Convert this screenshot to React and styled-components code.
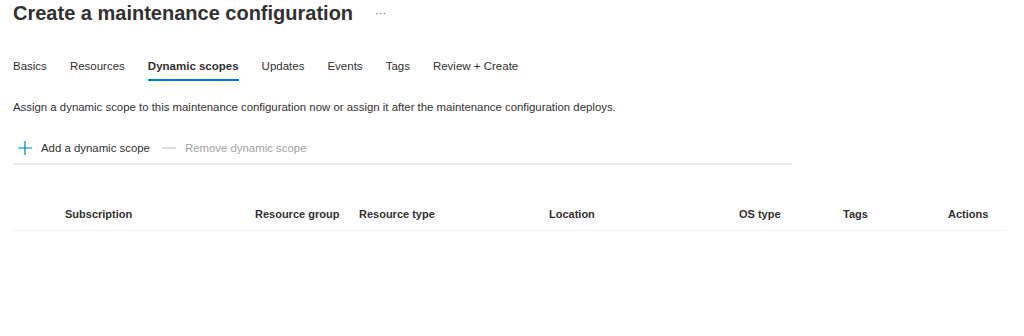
import styled, { createGlobalStyle } from "styled-components";

const GlobalStyle = createGlobalStyle`
  body {
    margin: 0;
    background: #ffffff;
    font-family: "Liberation Sans", Arial, sans-serif;
    color: #323130;
  }
`;

const tabs = ["Basics", "Resources", "Dynamic scopes", "Updates", "Events", "Tags", "Review + Create"];
const columns = ["", "Subscription", "Resource group", "Resource type", "Location", "OS type", "Tags", "Actions"];

const App = () => {
  return (
    <>
      <GlobalStyle />
      <Page>
        <TitleRow>
          <Title>Create a maintenance configuration</Title>
          <More>···</More>
        </TitleRow>
        <TabBar>
          {tabs.map((t) => (
            <Tab key={t} $active={t === "Dynamic scopes"}>
              {t}
            </Tab>
          ))}
        </TabBar>
        <Description>
          Assign a dynamic scope to this maintenance configuration now or assign it after the maintenance configuration deploys.
        </Description>
        <Toolbar>
          <ToolButton>
            <svg width="16" height="16" viewBox="0 0 16 16">
              <path d="M8 1v14M1 8h14" stroke="#0078d4" strokeWidth="1.2" fill="none" />
            </svg>
            Add a dynamic scope
          </ToolButton>
          <ToolButton $disabled>
            <svg width="16" height="16" viewBox="0 0 16 16">
              <path d="M1 8h14" stroke="#c8c6c4" strokeWidth="1.2" fill="none" />
            </svg>
            Remove dynamic scope
          </ToolButton>
        </Toolbar>
        <HeaderRow>
          {columns.map((c, i) => (
            <HeaderCell key={i}>{c}</HeaderCell>
          ))}
        </HeaderRow>
      </Page>
    </>
  );
};

export default App;

const Page = styled.div`
  padding: 0 17px 0 13px;
`;

const TitleRow = styled.div`
  display: flex;
  align-items: center;
  height: 26px;
`;

const Title = styled.h1`
  margin: 0;
  font-size: 20px;
  font-weight: 600;
  line-height: 26px;
  color: #323130;
`;

const More = styled.span`
  margin-left: 22px;
  font-size: 11px;
  color: #605e5c;
`;

const TabBar = styled.div`
  display: flex;
  gap: 23px;
  margin-top: 26px;
  height: 28px;
`;

const Tab = styled.div`
  position: relative;
  font-size: 11.5px;
  line-height: 28px;
  font-weight: ${(p) => (p.$active ? 600 : 400)};
  color: #323130;
  &::after {
    content: "";
    position: absolute;
    left: 0;
    right: 0;
    bottom: -1px;
    height: 2px;
    background: ${(p) => (p.$active ? "#0078d4" : "transparent")};
  }
`;

const Description = styled.p`
  margin: 18px 0 0;
  font-size: 11.4px;
  line-height: 18px;
`;

const Toolbar = styled.div`
  display: flex;
  align-items: center;
  gap: 11px;
  width: 779px;
  height: 33px;
  margin-top: 16px;
  padding-left: 4px;
  box-sizing: border-box;
  border-bottom: 2px solid #edebe9;
`;

const ToolButton = styled.div`
  display: flex;
  align-items: center;
  gap: 8px;
  font-size: 11.4px;
  color: ${(p) => (p.$disabled ? "#a19f9d" : "#323130")};
`;

const HeaderRow = styled.div`
  display: grid;
  grid-template-columns: 52px 190px 104px 190px 190px 104px 105px 1fr;
  height: 33px;
  margin-top: 32px;
  align-items: center;
  border-bottom: 1px solid #f3f2f1;
`;

const HeaderCell = styled.div`
  font-size: 11px;
  font-weight: 600;
  color: #323130;
  white-space: nowrap;
`;
